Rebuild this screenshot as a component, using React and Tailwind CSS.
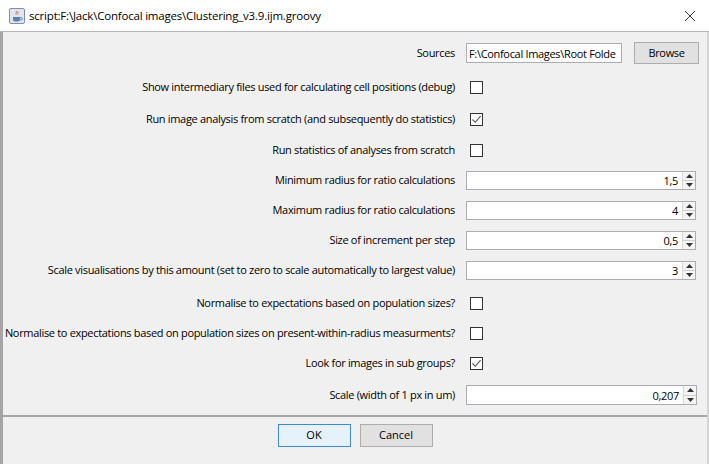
import React from "react";

const rows = [
  { label: "Sources", type: "source", mt: "mt-[9px]" },
  { label: "Show intermediary files used for calculating cell positions (debug)", type: "check", checked: false, mt: "mt-[10px]" },
  { label: "Run image analysis from scratch (and subsequently do statistics)", type: "check", checked: true, mt: "mt-[8px]" },
  { label: "Run statistics of analyses from scratch", type: "check", checked: false, mt: "mt-[7px]" },
  { label: "Minimum radius for ratio calculations", type: "spin", value: "1,5", mt: "mt-[6px]" },
  { label: "Maximum radius for ratio calculations", type: "spin", value: "4", mt: "mt-[6px]" },
  { label: "Size of increment per step", type: "spin", value: "0,5", mt: "mt-[6px]" },
  { label: "Scale visualisations by this amount (set to zero to scale automatically to largest value)", type: "spin", value: "3", mt: "mt-[6px]" },
  { label: "Normalise to expectations based on population sizes?", type: "check", checked: false, mt: "mt-[9px]" },
  { label: "Normalise to expectations based on population sizes on present-within-radius measurments?", type: "check", checked: false, mt: "mt-[6px]" },
  { label: "Look for images in sub groups?", type: "check", checked: true, mt: "mt-[6px]" },
  { label: "Scale (width of 1 px in um)", type: "spin", value: "0,207", wide: true, mt: "mt-[8px]" },
];

const JavaIcon = () => (
  <svg width="16" height="16" viewBox="0 0 16 16">
    <rect x="0.5" y="0.5" width="15" height="15" rx="1.5" fill="#dfe6ef" stroke="#7d8fa6" />
    <path d="M4 9h7v2.5a2 2 0 0 1-2 2H6a2 2 0 0 1-2-2z" fill="#5b7fb0" />
    <path d="M11 9.5h1.2a1.2 1.2 0 0 1 0 2.4H11" fill="none" stroke="#5b7fb0" strokeWidth="0.9" />
    <path d="M7 3c1.5 1.2-1 2 0.3 3.6M8.8 3.6c1 1-0.8 1.6 0.2 2.8" fill="none" stroke="#e0603a" strokeWidth="1" />
  </svg>
);

const CheckBox = ({ checked }) => (
  <div className="ml-[4px] w-[13px] h-[13px] bg-white border border-[#333333] flex items-center justify-center">
    {checked && (
      <svg width="11" height="11" viewBox="0 0 11 11">
        <path d="M1.5 5.5 L4.3 8.3 L9.6 2.2" fill="none" stroke="#555" strokeWidth="1.1" />
      </svg>
    )}
  </div>
);

const Spinner = ({ value, wide }) => (
  <div className={`${wide ? "w-[231px] h-[20px]" : "w-[230px] h-[19px]"} bg-white border border-[#abadb3] flex items-center`}>
    <div className="flex-1 text-right pr-[4px] leading-none">{value}</div>
    <div className="w-[13px] h-full flex flex-col border-l border-[#d9d9d9] bg-[#f4f4f4]">
      <div className="flex-1 flex items-center justify-center border-b border-[#cfcfcf]">
        <svg width="7" height="4" viewBox="0 0 7 4"><path d="M0 4 L3.5 0 L7 4z" fill="#333" /></svg>
      </div>
      <div className="flex-1 flex items-center justify-center">
        <svg width="7" height="4" viewBox="0 0 7 4"><path d="M0 0 L3.5 4 L7 0z" fill="#333" /></svg>
      </div>
    </div>
  </div>
);

export default function App() {
  return (
    <div
      className="w-[709px] h-[464px] flex flex-col bg-white text-black text-[11px] overflow-hidden"
      style={{ fontFamily: '"Open Sans", "Noto Sans", sans-serif' }}
    >
      {/* title bar */}
      <div className="h-[32px] flex items-center pl-[9px] pr-[13px] border-b border-[#b9b9b9] shrink-0">
        <JavaIcon />
        <div className="ml-[4px] text-[11.5px] tracking-[-0.2px]">script:F:\Jack\Confocal images\Clustering_v3.9.ijm.groovy</div>
        <div className="ml-auto">
          <svg width="12" height="12" viewBox="0 0 12 12">
            <path d="M1 1 L11 11 M11 1 L1 11" stroke="#333" strokeWidth="1" />
          </svg>
        </div>
      </div>

      {/* body */}
      <div className="flex-1 flex flex-col bg-[#f0f0f0] border-l-[3px] border-r-[2px] border-l-[#a5a5a5] border-r-[#d4d4d4]">
        <div className="h-[385px] flex flex-col border-b-2 border-[#a7a7aa] tracking-[-0.32px]">
          {rows.map((r, i) => (
            <div key={i} className={`h-[24px] flex items-center shrink-0 ${r.mt}`}>
              <div className="w-[452px] shrink-0 text-right whitespace-nowrap">{r.label}</div>
              <div className="ml-[11px] flex items-center">
                {r.type === "check" && <CheckBox checked={r.checked} />}
                {r.type === "spin" && <Spinner value={r.value} wide={r.wide} />}
                {r.type === "source" && (
                  <>
                    <div className="w-[156px] h-[20px] bg-white border border-[#abadb3] flex items-center px-[2px] overflow-hidden whitespace-nowrap leading-none">
                      F:\Confocal Images\Root Folde
                    </div>
                    <button className="ml-[12px] w-[65px] h-[22px] bg-[#e1e1e1] border border-[#adadad] flex items-center justify-center">
                      Browse
                    </button>
                  </>
                )}
              </div>
            </div>
          ))}
        </div>

        {/* buttons */}
        <div className="flex-1 flex justify-center items-start pt-[7px] gap-[9px]">
          <button className="w-[73px] h-[23px] bg-[#e5f1fb] border-[1.5px] border-[#3c8ad3] flex items-center justify-center">
            OK
          </button>
          <button className="w-[73px] h-[23px] bg-[#e1e1e1] border border-[#adadad] flex items-center justify-center">
            Cancel
          </button>
        </div>
      </div>
    </div>
  );
}
